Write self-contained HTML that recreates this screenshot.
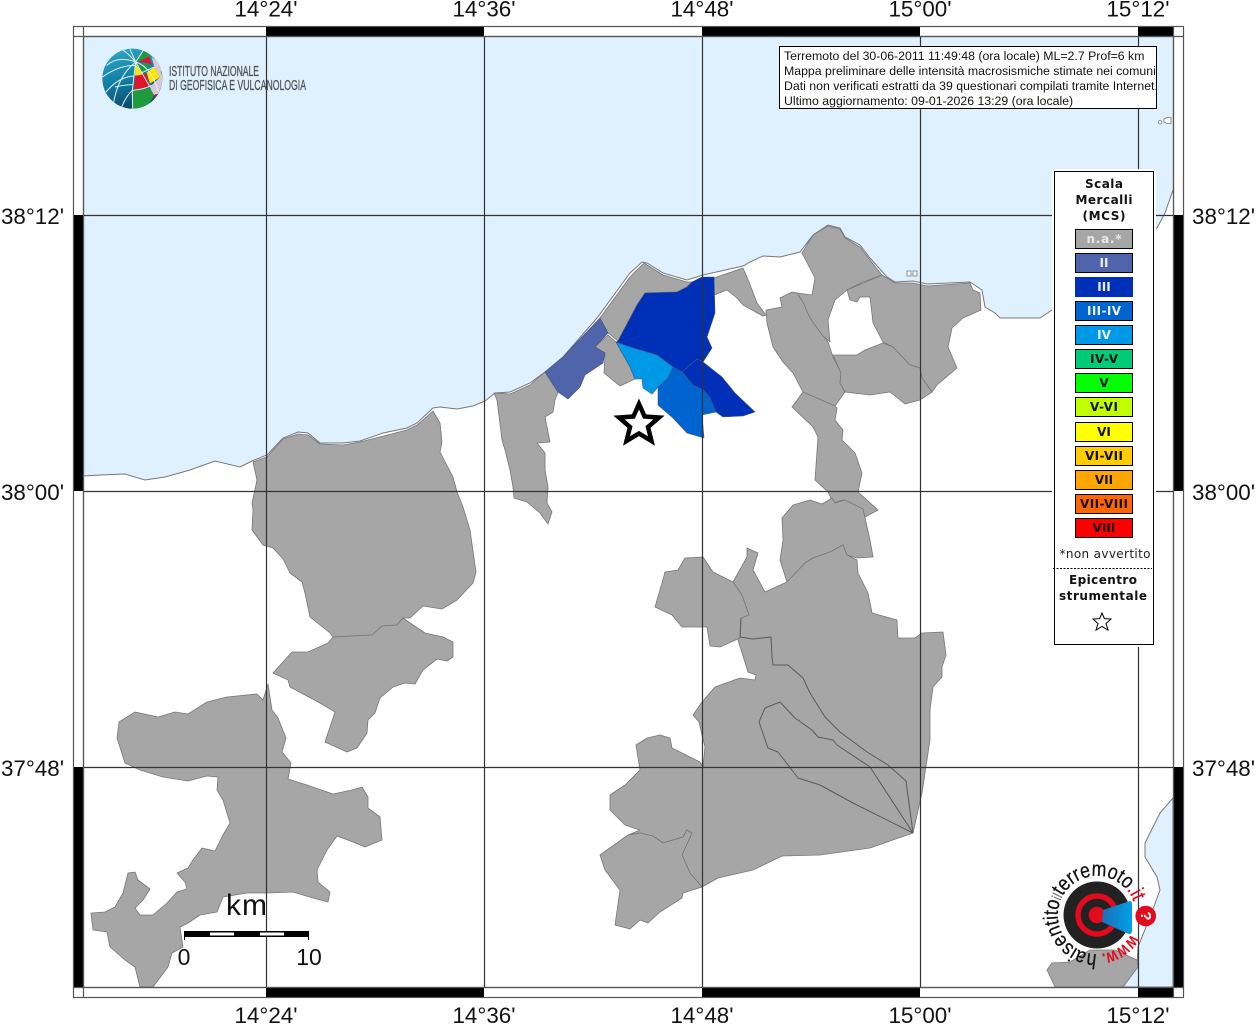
<!DOCTYPE html>
<html><head><meta charset="utf-8"><title>Mappa intensità macrosismiche</title>
<style>html,body{margin:0;padding:0;background:#fff}svg{display:block}</style></head>
<body>
<svg xmlns="http://www.w3.org/2000/svg" width="1256" height="1024" viewBox="0 0 1256 1024" font-family="'Liberation Sans',sans-serif">
<defs>
<linearGradient id="gb" x1="0.2" y1="0" x2="0.5" y2="1"><stop offset="0" stop-color="#2fa6c6"/><stop offset="0.55" stop-color="#0f7ca2"/><stop offset="1" stop-color="#0c4668"/></linearGradient>
<linearGradient id="cone" x1="0" y1="0" x2="1" y2="0"><stop offset="0" stop-color="#1d6fb5"/><stop offset="1" stop-color="#00a0e6"/></linearGradient>
<clipPath id="globe"><circle cx="112" cy="110" r="90"/></clipPath>
<clipPath id="map"><rect x="83" y="36" width="1090" height="951"/></clipPath>
<clipPath id="infoclip"><rect x="779" y="46" width="377" height="62"/></clipPath>
<path id="arc1" d="M1097 954 A39 39 0 1 1 1133 900.4"/>
<path id="arc2" d="M1131 934 A39 39 0 0 1 1102.4 953.6"/>
</defs>

<g clip-path="url(#map)">
<!-- sea -->
<polygon fill="#dff1ff" points="83,36 1173,36 1173,190 1165,213 1157,228 1110,265 1052,310 1040,318 1000,318 995,313 985,307 982,290 970,282 927,284 913,281 895,282 887,277 870,258 860,245 845,237 840,228 828,225 813,235 800,252 780,257 763,256 750,262 743,266 703,275 687,280 663,273 647,263 642,262 630,273 597,318 563,357 545,372 530,383 510,392 495,393 485,401 473,406 457,409 440,407 433,408 417,423 407,428 383,433 360,441 343,443 320,443 308,433 298,432 283,438 267,455 252,461 240,467 215,461 190,470 165,477 145,480 125,474 100,475 83,476"/>
<polyline fill="none" stroke="#777" stroke-width="1" points="1173,190 1165,213 1157,228 1110,265 1052,310 1040,318 1000,318 995,313 985,307 982,290 970,282 927,284 913,281 895,282 887,277 870,258 860,245 845,237 840,228 828,225 813,235 800,252 780,257 763,256 750,262 743,266 703,275 687,280 663,273 647,263 642,262 630,273 597,318 563,357 545,372 530,383 510,392 495,393 485,401 473,406 457,409 440,407 433,408 417,423 407,428 383,433 360,441 343,443 320,443 308,433 298,432 283,438 267,455 252,461 240,467 215,461 190,470 165,477 145,480 125,474 100,475 83,476"/>
<polygon fill="#dff1ff" stroke="#777" stroke-width="1" points="1173,798 1160,813 1145,843 1145,857 1157,877 1160,890 1150,917 1138,947 1137,967 1123,987 1173,987"/>
<path d="M1160 120.5 a1.8 1.8 0 1 0 .1 0 M1164 119 l3 -1.500 h4 v6 h-4 l-3 -1.500z" fill="#fff" stroke="#777" stroke-width="0.8"/>
<rect x="907" y="271" width="4" height="5" fill="#fff" stroke="#777" stroke-width="0.8"/><rect x="913" y="271" width="4" height="5" fill="#fff" stroke="#777" stroke-width="0.8"/>

<!-- grey municipalities -->
<g fill="#a6a6a6" stroke="#777" stroke-width="0.8" stroke-linejoin="round">
<polygon points="268,684 272,710 278,718 286,738 282,752 291,763 288,779 307,785 333,794 352,790 362,787 368,797 368,808 380,817 382,840 365,847 353,842 337,836 327,850 317,870 318,882 330,892 328,902 313,898 293,892 267,893 247,893 223,897 217,912 200,915 188,923 180,927 183,947 172,953 168,967 153,987 140,987 135,967 125,960 110,947 107,932 93,930 91,913 105,912 115,907 123,893 128,873 135,872 138,880 150,889 143,900 135,908 140,915 153,915 167,903 177,892 187,889 185,882 177,873 188,868 193,860 202,848 215,851 223,835 230,823 223,800 217,790 218,777 207,776 188,781 163,777 140,770 125,763 117,738 119,722 135,712 158,717 175,712 188,714 207,702 227,697 257,694 263,700"/>
<polygon points="433,411 440,423 442,442 440,452 453,477 457,492 463,507 470,530 476,572 473,583 457,600 442,609 423,606 410,618 403,618 397,625 382,626 372,635 333,637 330,633 310,617 305,593 302,582 290,573 283,559 273,548 263,545 252,530 253,510 252,503 257,480 253,462 267,457 283,439 298,434 308,435 320,444 343,445 360,442 407,430 417,425"/>
<polygon points="403,618 413,625 425,633 443,637 453,642 453,657 447,661 437,659 423,670 415,684 405,683 393,687 380,698 375,713 368,720 367,733 357,748 347,752 325,742 335,712 320,703 290,687 288,680 273,673 292,652 308,652 328,643 333,637 372,635 382,626 397,625"/>
<polygon points="494,393 510,394 530,385 545,372 558,392 555,400 553,412 545,417 548,432 550,442 537,443 545,453 545,470 548,487 547,503 552,512 548,524 540,513 527,502 514,498 513,487 510,470 505,450 502,440 497,400"/>
<polygon points="600,318 630,277 644,263 663,275 687,282 692,282 687,287 677,292 645,293 637,305 618,341 608,333"/>
<polygon points="608,335 595,347 605,353 604,373 620,386 635,379 630,367 616,342"/>
<polygon points="714,278 743,268 749,282 757,303 766,315 763,316 743,305 737,298 727,290 714,295"/>
<polygon points="766,310 782,307 780,298 792,292 797,293 803,302 810,318 828,342 833,357 841,373 840,383 845,392 835,406 803,392 793,373 783,362 773,347 767,323"/>
<polygon points="797,293 812,295 815,278 802,253 813,235 828,226 840,229 845,238 860,247 870,260 882,275 863,282 847,290 835,300 828,320 830,342 822,335 810,318 803,302"/>
<polygon points="847,290 882,275 895,283 913,283 927,286 970,283 973,290 980,293 981,310 963,318 952,328 948,347 957,368 937,385 932,392 922,378 920,368 910,365 893,347 883,342 873,323 870,297 860,297 857,302 850,300"/>
<polygon points="833,355 845,355 857,355 865,350 883,343 893,347 910,365 920,368 922,378 932,392 920,400 905,404 890,392 870,395 845,392 840,383 841,373"/>
<polygon points="803,392 835,406 837,408 835,420 843,430 842,440 855,453 862,473 858,492 878,510 865,517 860,508 843,500 833,503 828,492 815,480 818,437 813,427 792,407"/>
<polygon points="782,518 793,505 810,500 822,504 832,498 835,503 845,500 863,509 865,518 870,540 873,557 857,558 847,555 843,545 830,552 813,558 805,563 787,582 780,560 783,540"/>
<polygon points="733,582 747,557 747,548 758,553 753,570 765,592 787,582 805,563 813,558 830,552 843,545 847,555 857,560 858,573 868,593 872,613 897,620 898,638 915,638 922,633 943,632 946,655 942,667 942,677 933,687 930,710 930,740 922,793 913,833 870,848 820,855 782,856 753,870 718,878 702,887 690,873 682,855 692,833 687,830 683,837 663,843 653,836 640,833 628,835 640,830 625,825 610,810 610,795 625,785 640,770 636,745 647,738 660,735 670,738 672,748 690,757 700,762 703,767 705,747 702,735 699,722 693,715 702,702 715,687 740,678 755,680 756,675 748,672 738,640 740,617 749,615 742,595"/>
<polygon points="628,835 640,833 653,836 663,843 683,837 687,830 692,833 682,855 690,873 702,887 683,893 682,898 660,912 648,923 640,920 630,929 615,925 620,890 605,870 600,855"/>
<polygon points="655,607 662,583 665,572 678,570 685,558 703,557 713,572 733,582 742,595 749,615 741,618 740,638 720,647 710,646 707,627 682,627 672,615"/>
<polygon points="1047,970 1052,963 1070,962 1090,950 1115,950 1137,960 1138,967 1123,987 1055,987"/>
</g>
<g fill="none" stroke="#5a5a5a" stroke-width="1" stroke-linejoin="round">
<polyline points="741,618 740,637 753,639 771,637 772,657 773,665 788,665 803,678 810,693 825,717 840,732 867,752 888,765 906,781 913,833"/>
<polyline points="913,833 870,767 837,745 833,740 818,737 812,730 795,718 780,702 765,708 759,722 768,748 778,752 798,778 820,785 853,803 913,833"/>
</g>

<!-- blue municipalities -->
<g stroke="#44557a" stroke-width="0.6" stroke-linejoin="round">
<polygon fill="#4f64ab" points="545,372 563,357 600,318 608,333 595,347 605,353 603,363 585,375 580,387 568,399 558,392"/>
<polygon fill="#0030b8" points="702,277 714,277 715,313 707,337 712,348 703,362 697,359 682,372 673,367 657,355 630,347 616,342 618,341 637,305 645,293 677,292 687,287 692,282"/>
<polygon fill="#0030b8" points="682,372 697,359 703,362 722,377 735,393 755,412 743,416 723,417 716,412 710,398 703,390 693,385"/>
<polygon fill="#0099e8" points="616,342 630,347 657,355 673,367 668,378 658,387 652,394 643,388 642,379 635,379 630,367"/>
<polygon fill="#0064cf" points="673,367 682,372 693,385 703,390 710,398 716,412 702,415 704,438 687,433 673,418 658,405 658,387 668,378"/>
</g>
</g>

<!-- grid -->
<g stroke="#333" stroke-width="1.2" fill="none">
<path d="M266.500 36V987M484.500 36V987M702.500 36V987M920.500 36V987M1138.500 36V987M83 215.500H1173M83 491.500H1173M83 767.500H1173"/>
</g>

<!-- frame -->
<g fill="#000">
<rect x="266" y="26" width="218" height="10"/><rect x="702" y="26" width="218" height="10"/><rect x="1138" y="26" width="35" height="10"/>
<rect x="266" y="987" width="218" height="10"/><rect x="702" y="987" width="218" height="10"/><rect x="1138" y="987" width="35" height="10"/>
<rect x="73" y="215" width="10" height="276"/><rect x="73" y="767" width="10" height="220"/>
<rect x="1173" y="215" width="10" height="276"/><rect x="1173" y="767" width="10" height="220"/>
</g>
<g fill="none" stroke="#555" stroke-width="1.2">
<rect x="73.500" y="26.500" width="1110" height="971"/>
<rect x="83.500" y="36.500" width="1090" height="951"/>
<path d="M83.500 26V997M1173.500 26V997M73 36.500H1183M73 987.500H1183"/>
</g>

<!-- axis labels -->
<g font-size="22.4" fill="#111">
<g text-anchor="middle">
<text x="266" y="16.500">14°24'</text><text x="484" y="16.500">14°36'</text><text x="702" y="16.500">14°48'</text><text x="920" y="16.500">15°00'</text><text x="1138" y="16.500">15°12'</text>
<text x="266" y="1023">14°24'</text><text x="484" y="1023">14°36'</text><text x="702" y="1023">14°48'</text><text x="920" y="1023">15°00'</text><text x="1138" y="1023">15°12'</text>
</g>
<g text-anchor="end"><text x="64" y="224">38°12'</text><text x="64" y="500">38°00'</text><text x="64" y="776">37°48'</text></g>
<text x="1192" y="224">38°12'</text><text x="1192" y="500">38°00'</text><text x="1192" y="776">37°48'</text>
</g>

<!-- epicentre star -->
<polygon fill="#fff" stroke="#000" stroke-width="4.500" stroke-linejoin="miter" points="639,404 644.600,416.500 659,417.500 648,427 651.500,441 639,433.500 626.500,441 630,427 619,417.500 633.400,416.500"/>

<!-- INGV logo -->
<g transform="translate(95 42) scale(0.3333)">
<circle cx="112" cy="110" r="90" fill="url(#gb)"/>
<g clip-path="url(#globe)">
<polygon fill="#d6c8d4" points="170,45 205,70 205,120 190,155 175,162 165,135 195,105 178,75"/>
<polygon fill="#1f9a3c" points="122,56 148,25 165,40 135,58"/>
<polygon fill="#e0142c" points="128,60 163,43 170,68 150,62"/>
<polygon fill="#ffe600" points="122,66 140,92 146,102 120,100"/>
<polygon fill="#1f9a3c" points="128,63 166,68 152,88 142,88"/>
<polygon fill="#e0142c" points="120,102 155,95 165,135 117,142"/>
<polygon fill="#ffe600" points="155,92 178,75 195,105 165,125"/>
<polygon fill="#1f9a3c" points="113,145 165,138 178,160 155,195 113,205"/>
<polygon fill="#1f9a3c" points="197,88 203,88 203,106"/>
<polygon fill="#e0142c" points="175,160 185,155 178,168"/>
<g fill="none" stroke="#dff0f4" stroke-width="3">
<path d="M122 60 Q100 35 85 25M122 60 Q70 100 55 185M122 60 L112 145 L113 205M35 70 Q70 40 122 60M22 105 Q70 70 120 70M33 150 Q70 105 117 102M60 135 Q90 128 116 128M80 195 Q95 160 112 145"/>
<path d="M122 60 L165 135M112 145 Q150 142 170 130M122 60 Q170 75 190 150M140 92 L178 75M105 22 L122 60M145 25 L122 60"/>
</g>
</g>
</g>
<g font-size="15" fill="#555" stroke="#555" stroke-width="0.35">
<text x="169" y="76" textLength="90" lengthAdjust="spacingAndGlyphs">ISTITUTO NAZIONALE</text>
<text x="169" y="90" textLength="137" lengthAdjust="spacingAndGlyphs">DI GEOFISICA E VULCANOLOGIA</text>
</g>

<!-- info box -->
<rect x="779.500" y="46.500" width="377" height="62" fill="#fff" stroke="#000" stroke-width="1"/>
<g font-size="12.300" fill="#111" clip-path="url(#infoclip)">
<text x="784" y="60">Terremoto del 30-06-2011 11:49:48 (ora locale) ML=2.7 Prof=6 km</text>
<text x="784" y="75">Mappa preliminare delle intensità macrosismiche stimate nei comuni</text>
<text x="784" y="90">Dati non verificati estratti da 39 questionari compilati tramite Internet.</text>
<text x="784" y="105">Ultimo aggiornamento: 09-01-2026 13:29 (ora locale)</text>
</g>

<!-- legend -->
<rect x="1052" y="169" width="104" height="478" fill="#fff"/>
<rect x="1054.500" y="171.500" width="99" height="473" fill="#fff" stroke="#000" stroke-width="1"/>
<g font-family="'DejaVu Sans',sans-serif" font-weight="700" font-size="12" text-anchor="middle" fill="#111">
<text x="1104" y="188" textLength="38">Scala</text>
<text x="1104" y="204" textLength="57">Mercalli</text>
<text x="1104" y="220" textLength="43">(MCS)</text>
</g>
<g stroke="#000" stroke-width="1">
<rect x="1075.500" y="229.500" width="57" height="19" fill="#a6a6a6"/>
<rect x="1075.500" y="253.500" width="57" height="19" fill="#4f64ab"/>
<rect x="1075" y="277" width="58" height="20" fill="#0030b8" stroke="none"/>
<rect x="1075.500" y="301.500" width="57" height="19" fill="#0064cf"/>
<rect x="1075.500" y="325.500" width="57" height="19" fill="#0099e8"/>
<rect x="1075.500" y="349.500" width="57" height="19" fill="#00cc77"/>
<rect x="1075.500" y="373.500" width="57" height="19" fill="#00ff00"/>
<rect x="1075.500" y="397.500" width="57" height="19" fill="#bfff00"/>
<rect x="1075.500" y="422.500" width="57" height="19" fill="#ffff00"/>
<rect x="1075.500" y="446.500" width="57" height="19" fill="#ffcc00"/>
<rect x="1075.500" y="470.500" width="57" height="19" fill="#ffa500"/>
<rect x="1075.500" y="494.500" width="57" height="19" fill="#ff6600"/>
<rect x="1075.500" y="518.500" width="57" height="19" fill="#ff0000"/>
</g>
<g font-family="'DejaVu Sans',sans-serif" font-weight="700" font-size="12" text-anchor="middle">
<g fill="#eee">
<text x="1104" y="243" textLength="35" fill="#e8e8e8">n.a.*</text>
<text x="1104" y="267">II</text>
<text x="1104" y="291">III</text>
<text x="1104" y="315" textLength="34">III-IV</text>
<text x="1104" y="339">IV</text>
</g>
<g fill="#111">
<text x="1104" y="363" textLength="28">IV-V</text>
<text x="1104" y="387">V</text>
<text x="1104" y="411" textLength="28">V-VI</text>
<text x="1104" y="436">VI</text>
<text x="1104" y="460" textLength="38">VI-VII</text>
<text x="1104" y="484">VII</text>
<text x="1104" y="508" textLength="48">VII-VIII</text>
<text x="1104" y="532">VIII</text>
</g>
</g>
<g font-family="'DejaVu Sans',sans-serif" text-anchor="middle" fill="#222">
<text x="1105" y="558" font-size="12" textLength="91">*non avvertito</text>
<text x="1103" y="584" font-size="12" font-weight="700" textLength="68" fill="#111">Epicentro</text>
<text x="1103" y="600" font-size="12" font-weight="700" textLength="88" fill="#111">strumentale</text>
</g>
<line x1="1053" y1="568.500" x2="1152" y2="568.500" stroke="#000" stroke-width="1" stroke-dasharray="2 1.500"/>
<polygon fill="#fff" stroke="#000" stroke-width="1" points="1102,613 1104.400,618.600 1111,619 1106,623.500 1108,630 1102,626.500 1096,630 1098,623.500 1093,619 1099.600,618.600"/>

<!-- scale bar -->
<text x="226" y="915" font-size="30" fill="#111" textLength="41">km</text>
<g>
<rect x="184" y="931" width="125" height="6" fill="#000"/>
<rect x="210" y="932.500" width="24" height="3" fill="#fff"/><rect x="260" y="932.500" width="24" height="3" fill="#fff"/>
<path d="M184.500 931V940M209.500 931V937M234.500 931V937M259.500 931V937M284.500 931V937M308.500 931V940" stroke="#000" stroke-width="1"/>
</g>
<text x="184" y="965" font-size="23" text-anchor="middle" fill="#111">0</text>
<text x="309" y="965" font-size="23" text-anchor="middle" fill="#111">10</text>

<!-- haisentito logo -->
<g>
<circle cx="1097" cy="915" r="33.500" fill="#222"/>
<circle cx="1097" cy="915" r="19" fill="none" stroke="#e30a1e" stroke-width="5.500"/>
<circle cx="1097" cy="915" r="8.300" fill="#e30a1e"/>
<path d="M1103 910 L1130 901 Q1132 901 1132 904 L1132 931 Q1132 934 1129 934 L1102 922 Z" fill="url(#cone)"/>
<circle cx="1145.700" cy="916" r="10.300" fill="#e30a1e"/>
<text x="0" y="0" transform="translate(1141 916) rotate(90)" font-size="15" font-weight="700" fill="#fff" text-anchor="middle">?</text>
<text font-size="21" fill="#111" stroke="#111" stroke-width="0.25"><textPath href="#arc1" textLength="170" lengthAdjust="spacingAndGlyphs">hai<tspan>sentito</tspan><tspan fill="#777" stroke="#777" font-size="14">il</tspan>terremoto<tspan fill="#e30a1e" stroke="#e30a1e">.it</tspan></textPath></text>
<text font-size="19" font-weight="700" fill="#e30a1e"><textPath href="#arc2" textLength="37" lengthAdjust="spacingAndGlyphs">www.</textPath></text>
</g>
</svg>
</body></html>
